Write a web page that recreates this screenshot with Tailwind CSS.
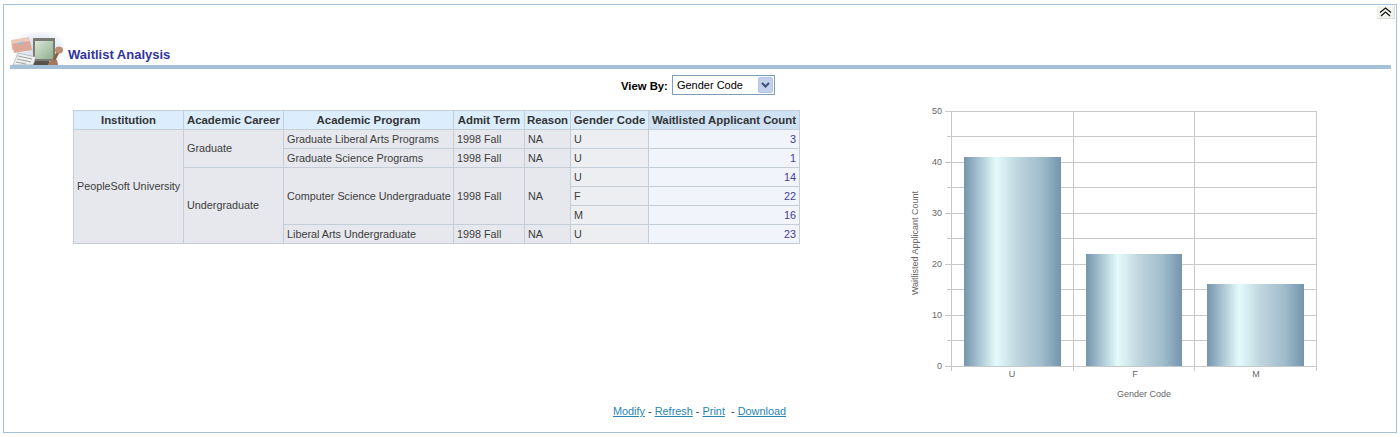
<!DOCTYPE html>
<html lang="en">
<head>
    <meta charset="UTF-8">
    <title>Waitlist Analysis</title>
    <script src="https://cdn.jsdelivr.net/npm/@tailwindcss/browser@4"></script>
</head>
<body class="bg-white font-['Liberation_Sans',Arial,sans-serif] overflow-hidden">

<div class="relative mt-[4px] mx-[3px] w-[1394px] h-[429px] border border-[#a5c0d9]">
    <!-- Collapse button -->
    <div class="absolute top-[1px] right-[1px] w-[18px] h-[13px] bg-[#f1f1ee] border-b border-r border-[#dcdcdc] flex items-center justify-center">
        <svg width="13" height="10" viewBox="0 0 13 10" fill="none" stroke="#111" stroke-width="1.2">
            <path d="M1 5.5 L6.5 1 L12 5.5"/>
            <path d="M2 9 L6.5 5 L11 9"/>
        </svg>
    </div>

    <!-- Title -->
    <div class="pt-[26px] pl-[6px] pr-[5px]">
        <div class="flex items-end h-[34px] border-b-[4px] border-[#a5c0d9] box-content">
            <svg width="53" height="33" viewBox="0 0 53 33" class="ml-[1px]">
                <defs>
                    <linearGradient id="screen" x1="0" y1="0" x2="1" y2="1">
                        <stop offset="0" stop-color="#dbe8d8"/>
                        <stop offset="1" stop-color="#8fae90"/>
                    </linearGradient>
                    <radialGradient id="glow" cx="0.5" cy="0.5" r="0.6">
                        <stop offset="0" stop-color="#c4d2ea"/>
                        <stop offset="1" stop-color="#ffffff"/>
                    </radialGradient>
                </defs>
                <rect x="4" y="0" width="49" height="33" fill="url(#glow)"/>
                <!-- monitor -->
                <path d="M22 33 L24 29 H38 L40 33 Z" fill="#55524e"/>
                <rect x="22" y="6" width="22" height="23" fill="#7b7b76"/>
                <rect x="24" y="9" width="18" height="18" fill="url(#screen)"/>
                <!-- tickets -->
                <path d="M0 8 L18 5 L20 14 L1 18 Z" fill="#ecc8b8"/>
                <path d="M1 12 L19 9 L21 18 L3 21 Z" fill="#dda995"/>
                <path d="M6 11 L13 9.5 L13.5 11.5 L7 13 Z" fill="#a9bad3"/>
                <!-- paper -->
                <path d="M7 21 L25 25 L22 33 L2 33 Z" fill="#eef0f0" stroke="#8b8b8b" stroke-width="0.5"/>
                <path d="M7 24 L21 27 M6 27 L20 30 M5 30 L15 32" stroke="#8c8c8c" stroke-width="0.8"/>
                <!-- stamp -->
                <path d="M37 32 L41 27 L46 28 L47 33 H37 Z" fill="#a5785c"/>
                <path d="M43 28 L47 20" stroke="#8f6246" stroke-width="3"/>
                <ellipse cx="48" cy="18" rx="4" ry="3.5" fill="#bb8f70"/>
            </svg>
            <span class="ml-[4px] mb-[2px] text-[13px] leading-[16px] font-bold text-[#3333a0]">Waitlist Analysis</span>
        </div>
    </div>

    <!-- View By -->
    <div class="absolute left-[617px] top-[70px] flex items-center">
        <span class="text-[11.3px] font-bold text-black mr-[4px] mt-[2px]">View By:</span>
        <div class="w-[103px] h-[20px] border border-[#7f9db9] bg-white flex items-center justify-between pl-[4px] pr-[1px]">
            <span class="text-[11px] text-black">Gender Code</span>
            <div class="w-[15px] h-[16px] bg-[#c3d0ec] rounded-[2px] border border-[#b3c3e5] flex items-center justify-center">
                <svg width="9" height="6" viewBox="0 0 9 6" fill="none" stroke="#3d4f7c" stroke-width="2"><path d="M1 1 L4.5 4.5 L8 1"/></svg>
            </div>
        </div>
    </div>

    <!-- Table -->
    <table class="absolute left-[69px] top-[105px] w-[726px] table-fixed border-collapse text-[10.8px] leading-[13px] text-[#3c3c3c]">
        <colgroup>
            <col class="w-[110px]"><col class="w-[100px]"><col class="w-[170px]"><col class="w-[71px]"><col class="w-[46px]"><col class="w-[78px]"><col class="w-[151px]">
        </colgroup>
        <thead>
            <tr class="h-[19px] text-[11.4px] font-bold text-[#333] bg-[#dcedfd]">
                <th class="border border-[#c5cdd6] p-0 text-center font-bold">Institution</th>
                <th class="border border-[#c5cdd6] p-0 text-center font-bold whitespace-nowrap">Academic Career</th>
                <th class="border border-[#c5cdd6] p-0 text-center font-bold">Academic Program</th>
                <th class="border border-[#c5cdd6] p-0 text-center font-bold whitespace-nowrap">Admit Term</th>
                <th class="border border-[#c5cdd6] p-0 text-center font-bold">Reason</th>
                <th class="border border-[#c5cdd6] p-0 text-center font-bold whitespace-nowrap">Gender Code</th>
                <th class="border border-[#c5cdd6] p-0 text-center font-bold bg-[#cfe2f3] whitespace-nowrap">Waitlisted Applicant Count</th>
            </tr>
        </thead>
        <tbody class="bg-[#e6e8ed]">
            <tr class="h-[19px]">
                <td rowspan="6" class="border border-[#c5cdd6] pl-[3px] py-0 whitespace-nowrap">PeopleSoft University</td>
                <td rowspan="2" class="border border-[#c5cdd6] pl-[3px] py-0">Graduate</td>
                <td class="border border-[#c5cdd6] pl-[3px] py-0 whitespace-nowrap">Graduate Liberal Arts Programs</td>
                <td class="border border-[#c5cdd6] pl-[3px] py-0">1998 Fall</td>
                <td class="border border-[#c5cdd6] pl-[3px] py-0">NA</td>
                <td class="border border-[#c5cdd6] pl-[3px] py-0 bg-[#eceef2]">U</td>
                <td class="border border-[#c5cdd6] pr-[3px] py-0 text-right bg-[#f1f4fa] text-[#3f3f9a]">3</td>
            </tr>
            <tr class="h-[19px]">
                <td class="border border-[#c5cdd6] pl-[3px] py-0 whitespace-nowrap">Graduate Science Programs</td>
                <td class="border border-[#c5cdd6] pl-[3px] py-0">1998 Fall</td>
                <td class="border border-[#c5cdd6] pl-[3px] py-0">NA</td>
                <td class="border border-[#c5cdd6] pl-[3px] py-0 bg-[#eceef2]">U</td>
                <td class="border border-[#c5cdd6] pr-[3px] py-0 text-right bg-[#f1f4fa] text-[#3f3f9a]">1</td>
            </tr>
            <tr class="h-[19px]">
                <td rowspan="4" class="border border-[#c5cdd6] pl-[3px] py-0">Undergraduate</td>
                <td rowspan="3" class="border border-[#c5cdd6] pl-[3px] py-0 whitespace-nowrap">Computer Science Undergraduate</td>
                <td rowspan="3" class="border border-[#c5cdd6] pl-[3px] py-0">1998 Fall</td>
                <td rowspan="3" class="border border-[#c5cdd6] pl-[3px] py-0">NA</td>
                <td class="border border-[#c5cdd6] pl-[3px] py-0 bg-[#eceef2]">U</td>
                <td class="border border-[#c5cdd6] pr-[3px] py-0 text-right bg-[#f1f4fa] text-[#3f3f9a]">14</td>
            </tr>
            <tr class="h-[19px]">
                <td class="border border-[#c5cdd6] pl-[3px] py-0 bg-[#eceef2]">F</td>
                <td class="border border-[#c5cdd6] pr-[3px] py-0 text-right bg-[#f1f4fa] text-[#3f3f9a]">22</td>
            </tr>
            <tr class="h-[19px]">
                <td class="border border-[#c5cdd6] pl-[3px] py-0 bg-[#eceef2]">M</td>
                <td class="border border-[#c5cdd6] pr-[3px] py-0 text-right bg-[#f1f4fa] text-[#3f3f9a]">16</td>
            </tr>
            <tr class="h-[19px]">
                <td class="border border-[#c5cdd6] pl-[3px] py-0 whitespace-nowrap">Liberal Arts Undergraduate</td>
                <td class="border border-[#c5cdd6] pl-[3px] py-0">1998 Fall</td>
                <td class="border border-[#c5cdd6] pl-[3px] py-0">NA</td>
                <td class="border border-[#c5cdd6] pl-[3px] py-0 bg-[#eceef2]">U</td>
                <td class="border border-[#c5cdd6] pr-[3px] py-0 text-right bg-[#f1f4fa] text-[#3f3f9a]">23</td>
            </tr>
        </tbody>
    </table>

    <!-- Chart -->
    <svg class="absolute left-[896px] top-[95px]" width="440" height="310" viewBox="900 100 440 310" font-family="Liberation Sans, Arial, sans-serif" font-size="9" fill="#666">
        <defs>
            <linearGradient id="bar" x1="0" y1="0" x2="1" y2="0">
                <stop offset="0" stop-color="#7495ad"/>
                <stop offset="0.12" stop-color="#9db9c9"/>
                <stop offset="0.33" stop-color="#e4fbfc"/>
                <stop offset="0.55" stop-color="#c0d6df"/>
                <stop offset="0.8" stop-color="#a0bccb"/>
                <stop offset="1" stop-color="#7495ad"/>
            </linearGradient>
        </defs>
        <g stroke="#c8c8c8" stroke-width="1" shape-rendering="crispEdges">
            <path d="M945 111.5H1317M947 136.5H1317M945 162.5H1317M947 187.5H1317M945 213.5H1317M947 238.5H1317M945 264.5H1317M947 289.5H1317M945 315.5H1317M947 340.5H1317M945 366.5H1317"/>
            <path d="M951.5 111V371M1073.5 111V371M1194.5 111V371M1316.5 111V371"/>
        </g>
        <rect x="964" y="157" width="97" height="209" fill="url(#bar)"/>
        <rect x="1086" y="254" width="96" height="112" fill="url(#bar)"/>
        <rect x="1207" y="284" width="97" height="82" fill="url(#bar)"/>
        <g text-anchor="end">
            <text x="942" y="114">50</text>
            <text x="942" y="165">40</text>
            <text x="942" y="216">30</text>
            <text x="942" y="267">20</text>
            <text x="942" y="318">10</text>
            <text x="942" y="369">0</text>
        </g>
        <g text-anchor="middle">
            <text x="1012" y="377">U</text>
            <text x="1135" y="377">F</text>
            <text x="1256" y="377">M</text>
            <text x="1144" y="397">Gender Code</text>
            <text transform="translate(918 243) rotate(-90)">Waitlisted Applicant Count</text>
        </g>
    </svg>

    <!-- Footer links -->
    <div class="absolute left-0 right-0 top-[399px] text-center text-[10.9px] leading-[14px] text-[#333] ml-[-1px]">
        <a href="#" class="text-[#2a86b0] underline">Modify</a> - <a href="#" class="text-[#2a86b0] underline">Refresh</a> - <a href="#" class="text-[#2a86b0] underline">Print</a>&nbsp; - <a href="#" class="text-[#2a86b0] underline">Download</a>
    </div>
</div>

</body>
</html>
